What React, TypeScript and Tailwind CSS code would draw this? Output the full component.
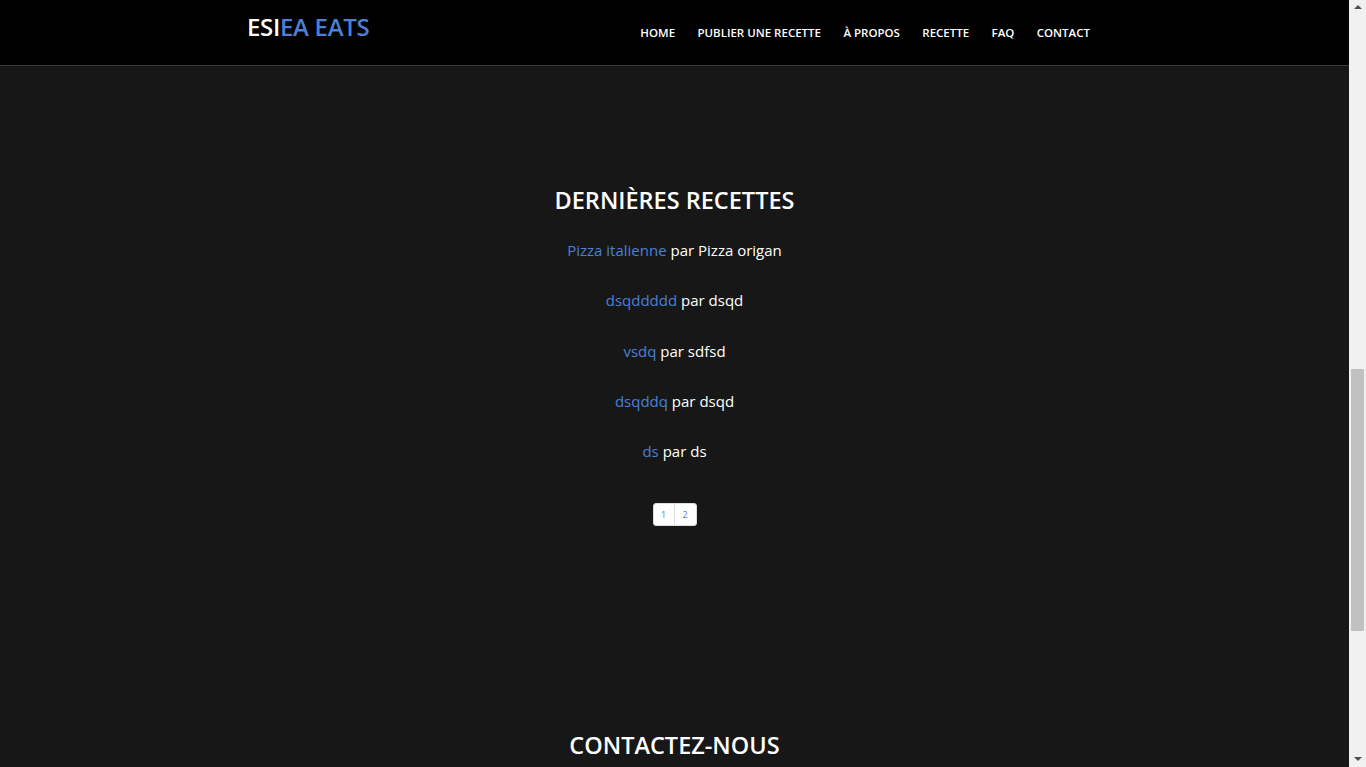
const recettes = [
  { titre: 'Pizza italienne', auteur: 'Pizza origan' },
  { titre: 'dsqddddd', auteur: 'dsqd' },
  { titre: 'vsdq', auteur: 'sdfsd' },
  { titre: 'dsqddq', auteur: 'dsqd' },
  { titre: 'ds', auteur: 'ds' },
];

const navItems = ['Home', 'Publier une recette', 'À propos', 'Recette', 'FAQ', 'Contact'];

export default function App() {
  return (
    <div className="flex h-[767px] w-full overflow-hidden bg-[#171717] font-['Open_Sans',sans-serif]">
      <div className="flex flex-1 flex-col">
        <header className="flex h-[66px] shrink-0 items-start justify-between border-b border-[#3a3a3a] bg-black pl-[247px] pr-[259px]">
          <div className="mt-[11px] text-[24px] font-semibold leading-[32px] tracking-[-0.3px]">
            <span className="text-white">ESI</span>
            <span className="text-[#4a80d6]">EA EATS</span>
          </div>
          <nav className="mt-[24px] flex gap-[22.4px] text-[11.5px] font-semibold uppercase leading-[18px] text-white">
            {navItems.map((item) => (
              <a key={item} href="#">
                {item}
              </a>
            ))}
          </nav>
        </header>

        <section className="flex flex-col items-center pt-[117px]">
          <h2 className="text-[23.5px] font-semibold uppercase leading-[34px] text-white">
            Dernières recettes
          </h2>
          <ul className="mt-[21px] flex flex-col items-center gap-[26.25px] text-[15px] leading-[24px]">
            {recettes.map((r) => (
              <li key={r.titre}>
                <a href="#" className="text-[#4a80d6]">
                  {r.titre}
                </a>{' '}
                <span className="text-white">par {r.auteur}</span>
              </li>
            ))}
          </ul>
          <div className="mt-[40px] flex rounded-[3px] border border-[#ddd] bg-white text-[9px] leading-[21px] text-[#4a80d6]">
            <a href="#" className="w-[21px] border-r border-[#ddd] text-center">
              1
            </a>
            <a href="#" className="w-[21px] text-center">
              2
            </a>
          </div>
        </section>

        <section className="flex flex-col items-center pt-[202px]">
          <h2 className="text-[23.5px] font-semibold uppercase leading-[34px] text-white">
            Contactez-nous
          </h2>
        </section>
      </div>

      <div className="flex w-[17px] shrink-0 flex-col items-center bg-[#f1f1f1]">
        <div className="mt-[5px] h-0 w-0 border-x-[4px] border-b-[4px] border-x-transparent border-b-[#505050]" />
        <div className="mt-[360px] h-[262px] w-[13px] bg-[#c1c1c1]" />
        <div className="mt-auto mb-[6px] h-0 w-0 border-x-[4px] border-t-[4px] border-x-transparent border-t-[#505050]" />
      </div>
    </div>
  );
}
